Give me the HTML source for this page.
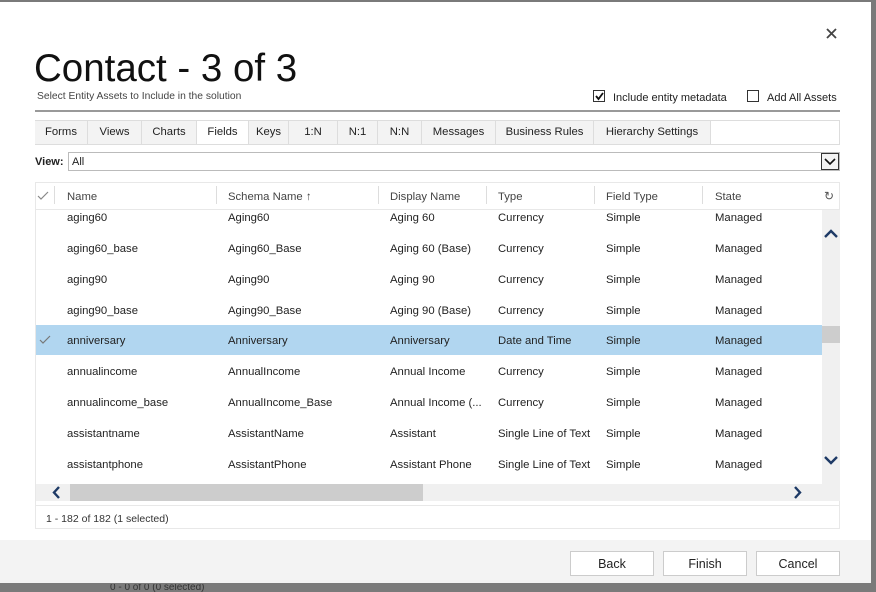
<!DOCTYPE html>
<html><head><style>
*{margin:0;padding:0;box-sizing:border-box}
html,body{width:876px;height:592px;overflow:hidden}
body{background:#7a7a7a;font-family:"Liberation Sans",sans-serif;position:relative;color:#222}
.dlg{position:absolute;left:0;top:2px;width:871px;height:581px;background:#fff}
.a{position:absolute;white-space:nowrap}
.t{font-size:12px}
.tab{position:absolute;top:121px;height:23px;background:#f3f3f3;border-right:1px solid #ddd;font-size:11.3px;text-align:center;line-height:23px}
.row{position:absolute;left:35px;width:787px;height:30px;font-size:11.3px}
.row span{position:absolute;top:10px}
.btn{position:absolute;top:551px;width:84px;height:25px;border:1px solid #ccc;background:#fff;font-size:12.5px;text-align:center;line-height:24px}
.hd{position:absolute;top:191px;font-size:11.3px;color:#444}
.sep{position:absolute;top:186px;width:1px;height:18px;background:#ddd}
</style></head><body>
<div class="a" style="left:110px;top:584px;height:8px;overflow:hidden;font-size:10px;line-height:8px;color:#333">0 - 0 of 0 (0 selected)</div>
<div class="dlg"></div>
<svg class="a" style="left:826px;top:28px" width="11" height="11"><path d="M1 1L10 10M10 1L1 10" stroke="#444" stroke-width="1.8"/></svg>
<div class="a" style="left:34px;top:47px;font-size:38.5px;color:#111">Contact - 3 of 3</div>
<div class="a" style="left:37px;top:91px;font-size:10.3px;color:#444">Select Entity Assets to Include in the solution</div>
<div class="a" style="left:35px;top:110px;width:805px;height:2px;background:#999"></div>
<div class="a" style="left:593px;top:90px;width:12px;height:12px;border:1px solid #333"></div>
<svg class="a" style="left:594px;top:91px" width="11" height="11"><path d="M2 5L4.5 8L9 2" stroke="#111" stroke-width="1.8" fill="none"/></svg>
<div class="a t" style="left:613px;top:92px;font-size:11px">Include entity metadata</div>
<div class="a" style="left:747px;top:90px;width:12px;height:12px;border:1px solid #333"></div>
<div class="a t" style="left:767px;top:92px;font-size:11px">Add All Assets</div>
<div class="a" style="left:35px;top:120px;width:805px;height:25px;border:1px solid #ddd;border-bottom:none"></div>
<div class="tab" style="left:35px;width:53px">Forms</div>
<div class="tab" style="left:88px;width:54px">Views</div>
<div class="tab" style="left:142px;width:55px">Charts</div>
<div class="tab" style="left:197px;width:52px;background:#fff">Fields</div>
<div class="tab" style="left:249px;width:40px">Keys</div>
<div class="tab" style="left:289px;width:49px">1:N</div>
<div class="tab" style="left:338px;width:40px">N:1</div>
<div class="tab" style="left:378px;width:44px">N:N</div>
<div class="tab" style="left:422px;width:74px">Messages</div>
<div class="tab" style="left:496px;width:98px">Business Rules</div>
<div class="tab" style="left:594px;width:117px">Hierarchy Settings</div>
<div class="a" style="left:35px;top:144px;width:805px;height:1px;background:#ddd"></div>
<div class="a t" style="left:35px;top:156px;font-weight:bold;font-size:11px">View:</div>
<div class="a" style="left:68px;top:152px;width:772px;height:19px;border:1px solid #bbb"></div>
<div class="a t" style="left:72px;top:156px;font-size:11px">All</div>
<div class="a" style="left:821px;top:153px;width:18px;height:17px;border:1px solid #333;background:#f3f3f3"></div>
<svg class="a" style="left:824px;top:157px" width="12" height="9"><path d="M1 2L6 7L11 2" stroke="#111" stroke-width="1.6" fill="none"/></svg>
<div class="a" style="left:35px;top:182px;width:805px;height:347px;border:1px solid #e8e8e8"></div>
<svg class="a" style="left:37px;top:191px" width="12" height="10"><path d="M1 5L4 8L11 1" stroke="#888" stroke-width="1.2" fill="none"/></svg>
<div class="sep" style="left:54px"></div><div class="sep" style="left:216px"></div><div class="sep" style="left:378px"></div><div class="sep" style="left:486px"></div><div class="sep" style="left:594px"></div><div class="sep" style="left:702px"></div>
<div class="hd" style="left:67px">Name</div>
<div class="hd" style="left:228px">Schema Name ↑</div>
<div class="hd" style="left:390px">Display Name</div>
<div class="hd" style="left:498px">Type</div>
<div class="hd" style="left:606px">Field Type</div>
<div class="hd" style="left:715px">State</div>
<div class="a" style="left:824px;top:189px;font-size:12px;color:#555">↻</div>
<div class="a" style="left:36px;top:209px;width:804px;height:1px;background:#e8e8e8"></div>
<div class="a" style="left:36px;top:210px;width:804px;height:274px;overflow:hidden">
<div style="position:absolute;left:-36px;top:-210px;width:876px;height:700px">
<div class="row" style="top:202px"><span style="left:32px">aging60</span><span style="left:193px">Aging60</span><span style="left:355px">Aging 60</span><span style="left:463px">Currency</span><span style="left:571px">Simple</span><span style="left:680px">Managed</span></div>
<div class="row" style="top:233px"><span style="left:32px">aging60_base</span><span style="left:193px">Aging60_Base</span><span style="left:355px">Aging 60 (Base)</span><span style="left:463px">Currency</span><span style="left:571px">Simple</span><span style="left:680px">Managed</span></div>
<div class="row" style="top:264px"><span style="left:32px">aging90</span><span style="left:193px">Aging90</span><span style="left:355px">Aging 90</span><span style="left:463px">Currency</span><span style="left:571px">Simple</span><span style="left:680px">Managed</span></div>
<div class="row" style="top:295px"><span style="left:32px">aging90_base</span><span style="left:193px">Aging90_Base</span><span style="left:355px">Aging 90 (Base)</span><span style="left:463px">Currency</span><span style="left:571px">Simple</span><span style="left:680px">Managed</span></div>
<div class="row" style="top:325px;background:#b1d6f0"><svg style="position:absolute;left:4px;top:10px" width="12" height="10"><path d="M1 5L4 8L11 1" stroke="#777" stroke-width="1.2" fill="none"/></svg><span style="left:32px">anniversary</span><span style="left:193px">Anniversary</span><span style="left:355px">Anniversary</span><span style="left:463px">Date and Time</span><span style="left:571px">Simple</span><span style="left:680px">Managed</span></div>
<div class="row" style="top:356px"><span style="left:32px">annualincome</span><span style="left:193px">AnnualIncome</span><span style="left:355px">Annual Income</span><span style="left:463px">Currency</span><span style="left:571px">Simple</span><span style="left:680px">Managed</span></div>
<div class="row" style="top:387px"><span style="left:32px">annualincome_base</span><span style="left:193px">AnnualIncome_Base</span><span style="left:355px">Annual Income (...</span><span style="left:463px">Currency</span><span style="left:571px">Simple</span><span style="left:680px">Managed</span></div>
<div class="row" style="top:418px"><span style="left:32px">assistantname</span><span style="left:193px">AssistantName</span><span style="left:355px">Assistant</span><span style="left:463px">Single Line of Text</span><span style="left:571px">Simple</span><span style="left:680px">Managed</span></div>
<div class="row" style="top:449px"><span style="left:32px">assistantphone</span><span style="left:193px">AssistantPhone</span><span style="left:355px">Assistant Phone</span><span style="left:463px">Single Line of Text</span><span style="left:571px">Simple</span><span style="left:680px">Managed</span></div>
</div></div>
<div class="a" style="left:822px;top:210px;width:18px;height:291px;background:#f0f0f0"></div>
<div class="a" style="left:822px;top:326px;width:18px;height:17px;background:#cdcdcd"></div>
<svg class="a" style="left:824px;top:229px" width="14" height="10"><path d="M1 8L7 2L13 8" stroke="#1e3a66" stroke-width="2.4" fill="none"/></svg>
<svg class="a" style="left:824px;top:455px" width="14" height="10"><path d="M1 2L7 8L13 2" stroke="#1e3a66" stroke-width="2.4" fill="none"/></svg>
<div class="a" style="left:36px;top:484px;width:786px;height:17px;background:#f0f0f0"></div>
<div class="a" style="left:70px;top:484px;width:353px;height:17px;background:#cdcdcd"></div>
<svg class="a" style="left:51px;top:486px" width="10" height="13"><path d="M8 1L3 6.5L8 12" stroke="#1e3a66" stroke-width="2.4" fill="none"/></svg>
<svg class="a" style="left:793px;top:486px" width="10" height="13"><path d="M2 1L7 6.5L2 12" stroke="#1e3a66" stroke-width="2.4" fill="none"/></svg>
<div class="a" style="left:36px;top:505px;width:804px;height:1px;background:#e8e8e8"></div>
<div class="a" style="left:46px;top:513px;font-size:10.5px;color:#333">1 - 182 of 182 (1 selected)</div>
<div class="a" style="left:0;top:540px;width:871px;height:43px;background:#f3f3f3"></div>
<div class="btn" style="left:570px">Back</div>
<div class="btn" style="left:663px">Finish</div>
<div class="btn" style="left:756px">Cancel</div>
</body></html>
